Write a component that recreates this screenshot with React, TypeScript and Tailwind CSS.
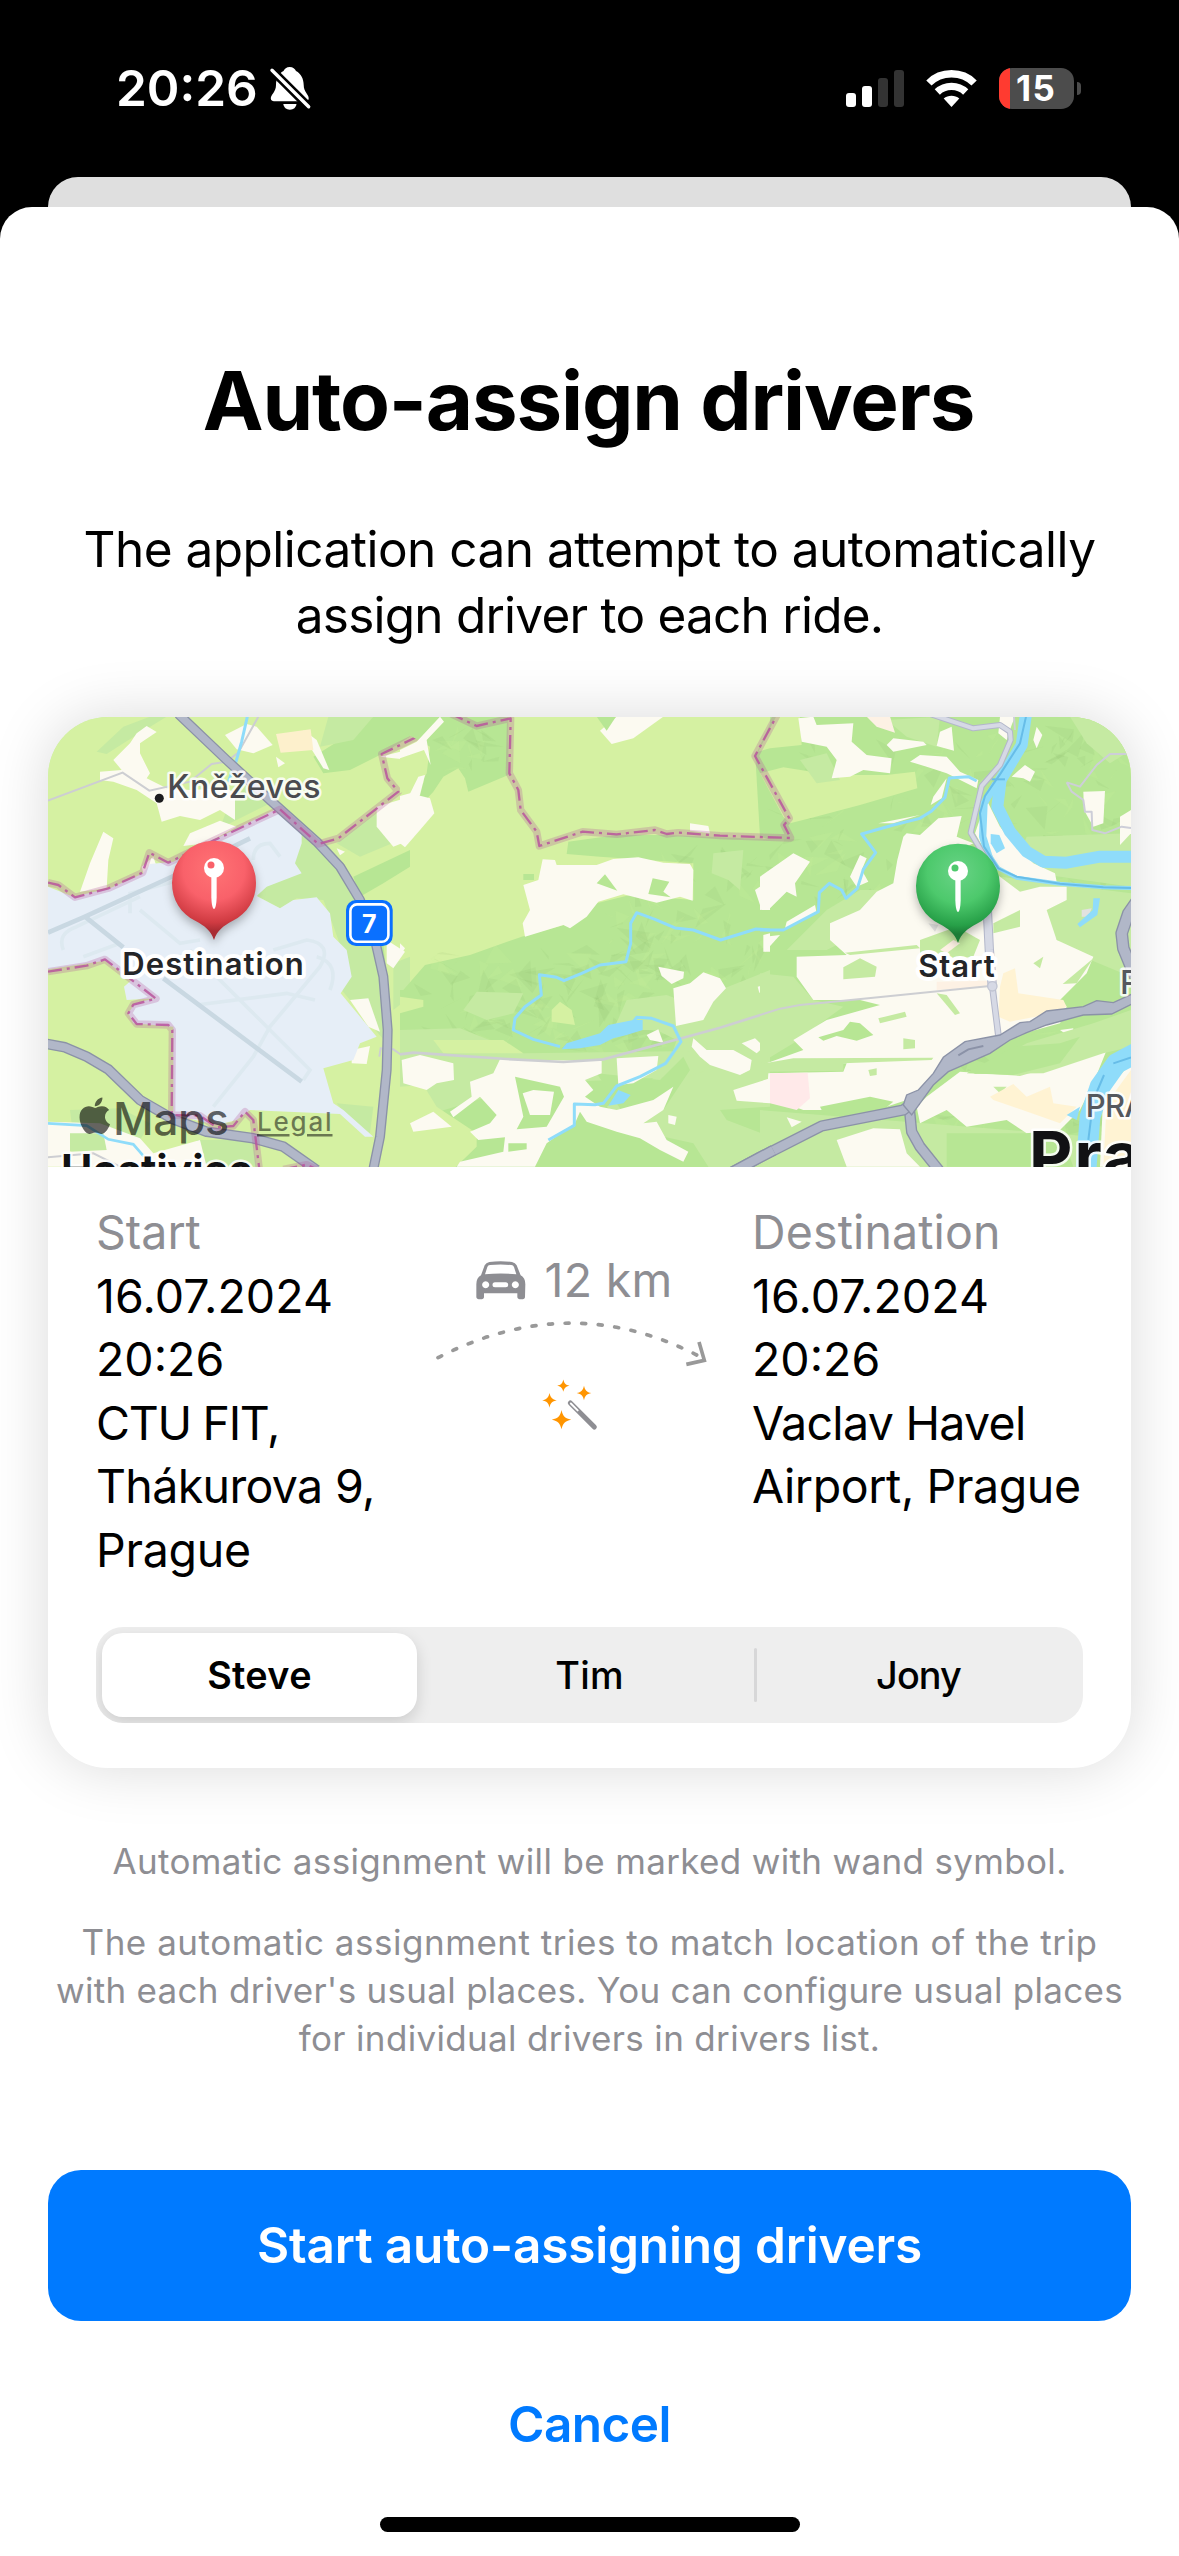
import React from "react";
import { FaApple } from "react-icons/fa";

const CREAM = "#fcfaf1";
const LIGHT = "#d5f1a2";
const MID = "#c5eaa2";
const FOREST = "#b7e694";
const WATER = "#8fdcfa";
const TAN = "#fff3d3";

function Shapes({ fill, list }: { fill: string; list: string[] }) {
  return (
    <g fill={fill}>
      {list.map((points, i) => (
        <polygon key={i} points={points} />
      ))}
    </g>
  );
}

function Highway({ d, width }: { d: string; width: number }) {
  return (
    <g fill="none" strokeLinejoin="round">
      <path d={d} stroke="#8b92a7" strokeWidth={width} />
      <path d={d} stroke="#b1b7c8" strokeWidth={width - 8} />
    </g>
  );
}

function Boundary({ d }: { d: string }) {
  return (
    <g fill="none" strokeLinejoin="round">
      <path d={d} stroke="#b0569c" strokeOpacity=".27" strokeWidth="22" />
      <path d={d} stroke="#b9559c" strokeOpacity=".85" strokeWidth="7" strokeDasharray="42 15 9 15" />
    </g>
  );
}

/* Relief facets: small translucent triangles scattered over the woodland. */
function Relief({ x, y, w, h, count, seed }: { x: number; y: number; w: number; h: number; count: number; seed: number }) {
  let s = seed;
  const rnd = () => {
    s = (s * 16807) % 2147483647;
    return s / 2147483647;
  };
  const items = Array.from({ length: count }, () => {
    const cx = x + rnd() * w;
    const cy = y + rnd() * h;
    const p = () => `${(cx + (rnd() - 0.5) * 100).toFixed(0)},${(cy + (rnd() - 0.5) * 90).toFixed(0)}`;
    return { points: `${p()} ${p()} ${p()}`, dark: rnd() > 0.4 };
  });
  return (
    <g>
      {items.map((t, i) => (
        <polygon key={i} points={t.points} fill={t.dark ? "#6b8f4a" : "#cdf29a"} fillOpacity={t.dark ? 0.065 : 0.16} />
      ))}
    </g>
  );
}

function Pin({ x, y, id, top, mid, edge, tip }: { x: number; y: number; id: string; top: string; mid: string; edge: string; tip: string }) {
  const body = "M0 172 C-10 142 -28 130 -55 115 C-100 92 -126 52 -126 0 A126 126 0 0 1 126 0 C126 52 100 92 55 115 C28 130 10 142 0 172Z";
  return (
    <g transform={`translate(${x} ${y})`}>
      <defs>
        <radialGradient id={id} cx="0" cy="-40" r="185" gradientUnits="userSpaceOnUse">
          <stop offset="0" stopColor={top} />
          <stop offset=".5" stopColor={mid} />
          <stop offset=".86" stopColor={edge} />
          <stop offset="1" stopColor={tip} />
        </radialGradient>
        <filter id={`${id}-shadow`} x="-40%" y="-40%" width="180%" height="180%">
          <feGaussianBlur stdDeviation="14" />
        </filter>
      </defs>
      <path d={body} transform="translate(0 14)" fill="#000" fillOpacity=".28" filter={`url(#${id}-shadow)`} />
      <path d={body} fill={`url(#${id})`} />
      <circle cx="0" cy="-44" r="30" fill="#fff" />
      <circle cx="-9" cy="-53" r="10.5" fill={mid} />
      <path d="M-8 -20 H8 V45 Q7 70 2 78 H-2 Q-7 70 -8 45Z" fill="#fff" />
    </g>
  );
}

function MapView() {
  return (
    <svg viewBox="48 717 1083 450" className="block h-[450px] w-full bg-[#c5eaa2]" role="img" aria-label="Route map">
      <rect x="48" y="717" width="1083" height="450" fill={LIGHT} />

      {/* western part: airport and Kněževes */}
      <g transform="translate(40 710) scale(.33333)">
        <Shapes fill={FOREST} list={["1000,20 1110,20 1110,80 1030,130 930,180 850,190 820,140 900,90 960,40", "940,500 1110,420 1110,470 1030,520 960,560", "985,720 1030,700 1050,900 1040,1000 960,850"]} />
        <Shapes fill={MID} list={["170,125 250,50 330,20 380,20 250,100 200,132", "600,225 680,240 700,275 540,355 560,300", "780,370 860,400 920,480 970,590 1010,700 1040,900 1040,1000 930,870 905,840 935,800 870,620 850,570 770,565 720,595 655,560 650,540 780,490 760,455 785,400", "865,20 1000,20 940,90 840,110", "890,400 1020,300 1080,390 960,440", "90,1200 240,1195 330,1240 300,1290 180,1260 95,1240", "1060,760 1110,740 1110,860 1060,900", "470,1290 640,1290 650,1370 500,1370", "890,1180 1000,1190 990,1270 930,1230"]} />
        <Shapes fill={CREAM} list={[
          "320,48 350,66 300,100 300,130 330,190 320,205 380,235 450,240 560,235 585,250 585,330 540,300 480,330 420,318 365,335 350,280 290,240 220,215 180,210 180,185 245,180 220,150 270,100 290,70",
          "555,75 620,42 650,50 698,105 640,130 590,118",
          "190,365 220,385 205,450 200,535 120,545 150,460",
          "790,60 830,90 868,180 850,175 810,110",
          "450,370 540,332 590,350 500,400 430,408",
          "1010,290 1110,260 1110,390 1060,410 1010,350",
          "1020,140 1110,118 1110,150",
          "24,1235 180,1240 300,1285 340,1330 480,1290 500,1370 24,1370",
          "930,870 985,865 1020,965 985,950",
          "935,1020 990,1008 980,1062 935,1060",
          "1040,690 1095,725 1060,775 1040,760",
          "1090,1060 1110,1060 1110,1130 1090,1120",
          "708,140 735,160 715,172",
          "890,415 915,425 900,436",
          "305,470 340,440 350,470 310,490",
        ]} />
        <Shapes fill={MID} list={["90,1270 190,1270 200,1320 90,1325"]} />
        <Shapes fill="#fdf0cc" list={["708,72 812,58 820,120 722,128"]} />
        <polygon
          fill="#e6eef7"
          points="24,530 100,560 210,535 310,490 330,462 400,455 520,390 720,292 785,375 785,400 765,460 785,490 680,530 650,558 720,595 760,570 830,562 870,610 880,680 920,720 935,800 902,850 1010,980 960,1000 940,1050 850,1075 880,1180 910,1200 1000,1280 975,1280 900,1212 630,1200 590,1230 530,1245 400,1215 400,950 280,940 265,910 285,880 345,865 260,870 252,830 275,810 195,752 24,778"
        />
        <g fill="none" stroke="#dde9f0" strokeWidth="11">
          <path d="M520 1190 L640 1040 L690 950 L840 770 Q880 700 800 690 L700 720" />
          <path d="M450 720 L580 850 L690 960 L810 1080 L790 1110" />
          <path d="M470 885 L740 850 L825 870" />
          <path d="M70 720 Q50 670 110 650 L300 560 M130 740 L240 700 M270 610 L270 550 L420 510 M300 600 L420 700 L480 690" />
          <path d="M640 450 Q640 400 690 400 L720 440 M830 740 Q900 760 870 840" />
        </g>
        <g fill="none" stroke="#c9d8e2" strokeWidth="14">
          <path d="M24 668 L130 622 L400 498 L630 385" />
          <path d="M135 620 L250 712 M370 805 L785 1115" />
        </g>
        <g fill="none" stroke="#cdced2" strokeWidth="6">
          <path d="M24 272 L248 188 L328 242 L450 215 L515 162 L560 155 L595 128 L655 20" />
          <path d="M1018 1040 L1022 1015 L1060 1018 L1080 1032 L1110 1030 M24 1342 L160 1330 L240 1370" />
        </g>
        <g fill="none" stroke={WATER} strokeWidth="9">
          <path d="M622 20 L605 95 L588 155 L565 215" />
          <path d="M24 1240 L140 1247 L205 1288 L280 1303 L312 1340" strokeWidth="8" />
        </g>
        <Highway width={30} d="M415 12 L560 150 L690 270 L830 395 L900 470 L960 570 L1005 690 L1030 800 L1043 960 L1040 1080 L1020 1280 L1000 1378" />
        <Highway width={32} d="M10 1000 L75 1012 L140 1040 L205 1078 L300 1170 L400 1228 L500 1265 L640 1285 L730 1310 L830 1380" />
        <Boundary d="M24 518 L55 525 L105 562 L205 535 L308 488 L328 428 L385 458 L520 392 L720 298 L835 402 L895 385 L1075 245 L1042 205 L1025 132 L1140 76 L1125 48 L1128 10" />
        <Boundary d="M24 785 L140 767 L195 748 L348 866 L280 884 L265 910 L290 942 L385 945 L397 960 L395 1215 L480 1217 L530 1252 L580 1248 L615 1205 L640 1230 L658 1378 M730 1378 L800 1364 L830 1378" />
      </g>

      {/* central part: valley and stream */}
      <g transform="translate(400 710) scale(.33333)">
        <Shapes fill={FOREST} list={[
          "0,20 325,20 325,195 205,245 195,205 175,175 130,200 100,245 45,305 25,290 80,190 90,110 0,60",
          "10,840 75,765 210,735 365,680 510,640 590,580 690,555 880,570 880,460 600,440 500,432 505,395 650,375 800,375 1110,388 1110,1378 0,1378 0,840",
          "1065,138 1110,110 1110,200",
        ]} />
        <Relief x={60} y={740} w={760} h={270} count={110} seed={11} />
        <Relief x={640} y={430} w={460} h={390} count={80} seed={29} />
        <Relief x={130} y={60} w={150} h={110} count={18} seed={5} />
        <Shapes fill={MID} list={[
          "640,960 680,870 800,855 920,900 960,840 1110,780 1110,1378 930,1378 880,1300 700,1260 620,1190 800,1080 830,990 770,960",
          "0,960 180,955 380,1035 0,1035",
          "940,430 1030,420 1020,540 985,510 935,490",
          "190,900 230,845 370,850 340,910 260,930",
          "0,1035 1110,1020 860,1100 400,1120 0,1240",
        ]} />
        <Shapes fill={FOREST} list={["590,1090 780,1110 850,1040 870,1080 790,1200 690,1240", "960,1200 1110,1190 1110,1280 980,1230", "520,1205 860,1330 850,1378 405,1378 450,1290"]} />
        <Shapes fill={LIGHT} list={["0,1130 70,1125 110,1190 230,1270 230,1310 160,1378 0,1378", "455,900 480,875 515,900 525,945 455,935", "500,460 590,442 585,470 510,470", "0,135 80,135 70,220 0,250", "0,860 70,870 70,890 0,910", "100,990 310,990 370,1030 130,1030"]} />
        <Shapes fill={CREAM} list={[
          "428,448 465,450 470,465 590,465 640,447 715,442 790,458 870,462 880,480 878,572 840,560 770,578 670,553 595,575 560,620 510,655 490,645 375,680 368,640 390,600 370,525 415,510",
          "0,258 30,250 90,265 103,310 60,360 15,412 0,400",
          "55,200 75,195 60,255 40,290 28,255",
          "120,20 132,35 80,90 92,165 72,120 0,145 0,120 50,95",
          "0,700 15,715 0,738",
          "600,62 650,20 790,20 700,85 635,102",
          "870,340 925,348 930,370 870,362",
          "775,770 852,785 850,805 815,822 785,798",
          "820,835 870,820 910,787 960,805 978,835 940,875 910,930 828,948",
          "1065,540 1110,510 1110,600 1085,600",
          "1090,675 1110,670 1110,725 1090,725",
          "1073,830 1110,820 1110,845 1078,848",
          "880,985 920,1020 1000,1020 1055,1050 1050,1080 1020,1095 930,1065 900,1040 875,1010",
          "1025,1000 1065,985 1092,1010 1070,1030",
          "740,975 775,958 790,998 750,990",
          "5,1050 60,1035 160,1060 162,1110 110,1120 80,1140 10,1120",
          "300,1048 605,1053 605,1090 555,1110 580,1140 555,1160 600,1190 650,1200 760,1170 820,1130 790,1200 730,1240 770,1235 800,1290 865,1325 850,1355 780,1320 720,1285 650,1265 560,1235 540,1205 525,1240 440,1300 405,1370 170,1370 180,1355 310,1325 315,1282 235,1290 210,1265 270,1240 290,1215 240,1160 160,1222 150,1205 215,1160 210,1115 280,1090",
          "650,1045 775,1038 770,1080 700,1120 655,1125",
          "1000,1140 1110,1105 1110,1180 1010,1172",
          "30,1240 100,1205 155,1250 40,1265",
        ]} />
        <Shapes fill={FOREST} list={["590,520 615,493 652,542", "745,552 758,505 808,515 790,545 812,562", "345,1100 480,1130 492,1160 440,1250 350,1258 370,1220", "325,1300 380,1300 380,1318 325,1325", "370,492 402,492 402,510 370,510", "590,20 648,20 620,62"]} />
        <Shapes fill={CREAM} list={["368,1150 400,1140 462,1145 450,1215 390,1215", "805,1215 830,1220 825,1245 805,1240"]} />
        <Shapes fill={WATER} list={["485,1018 500,1000 600,970 625,945 700,930 728,930 728,960 680,975 640,985 600,1005 540,1015", "625,1187 655,1140 692,1155 670,1180"]} />
        <path fill="none" stroke="#cdced2" strokeWidth="8" d="M0 1033 L40 1028 L320 1047 L490 1056 L610 1048 L850 983 L960 953 L1110 906 L1130 900" />
        <g fill="none" stroke={WATER} strokeWidth="9" strokeLinejoin="round">
          <path d="M1110 660 L1068 657 L962 690 L880 660 L825 654 L765 628 L710 608 L692 640 L692 700 L678 755 L600 765 L545 790 L492 812 L470 802 L418 794 L424 855 L375 890 L345 925 L340 960 L400 988 L480 1010" />
          <path d="M700 935 L710 922 L755 925 L820 948 L843 995 L797 1060 L720 1100 L650 1128 L610 1180 L585 1184 L523 1182 L523 1246 L445 1290" />
        </g>
      </g>

      {/* eastern part: river and city */}
      <g transform="translate(760 710) scale(.33333)">
        <rect x="30" y="15" width="1090" height="1365" fill={FOREST} />
        <polygon fill={FOREST} points="-14,138 40,20 60,20 60,400 0,380" />
        <Relief x={50} y={70} w={1040} h={530} count={170} seed={71} />
        <Relief x={70} y={1000} w={1030} h={340} count={60} seed={93} />
        <Shapes fill={LIGHT} list={["-5,125 48,20 120,20 125,105 30,115", "0,190 70,172 215,195 380,195 465,185 472,235 300,285 150,325 90,340 70,320"]} />
        <Shapes fill={MID} list={["930,20 1113,20 1113,120 1050,160 980,100", "80,720 200,600 300,540 420,540 400,620 200,720", "0,790 100,800 160,870 250,890 100,1000 0,1060", "800,380 1113,370 1113,530 900,500 760,480", "720,500 1113,550 1113,800 920,720", "600,1090 1000,1000 1000,1080 760,1130", "0,1200 1000,1280 1000,1378 0,1378", "120,150 200,130 240,210 170,220", "380,30 540,20 530,110 440,80"]} />
        <Shapes fill={CREAM} list={[
          "115,25 160,20 170,45 280,40 275,95 320,135 395,145 390,190 310,180 270,200 215,205 230,150 200,110 125,95",
          "380,105 400,85 490,95 500,105 400,125",
          "540,65 575,50 582,122 530,108",
          "450,155 480,135 560,140 600,185 655,210 650,235 560,190 500,170",
          "720,20 765,20 755,45 740,90 715,70",
          "830,50 847,75 830,115 820,90",
          "755,200 795,165 825,185 810,215 790,205",
          "970,245 1035,243 1030,340 1000,350 972,300",
          "1080,320 1113,300 1113,370 1080,405",
          "680,270 720,350 760,400 820,460 885,490 890,515 760,500 690,450 645,370",
          "440,370 480,375 535,325 605,318 590,380 640,400 600,420 720,500 780,545 840,530 920,530 920,570 860,600 890,690 1000,740 980,790 900,870 920,890 900,940 720,990 600,1040 520,1100 440,1170 350,1200 130,1200 20,1160 25,1090 250,1085 260,1060 20,1060 130,1020 100,990 200,930 360,885 300,870 160,870 110,800 110,740 260,735 210,690 210,640 300,600 350,545 400,520 412,450 430,380",
          "0,600 0,500 100,430 150,455 105,520 110,560 80,545 30,595",
          "300,435 320,445 305,480 325,515 290,530 270,500",
          "165,585 170,610 75,655 80,635",
          "15,680 60,675 15,725",
          "560,205 545,265 512,285 520,260",
          "355,340 480,315 400,340",
          "500,1160 600,1085 780,1098 860,1075 940,1055 1040,1020 1000,1120 960,1200 900,1260 800,1270 740,1230 620,1250 560,1200 480,1240 470,1190",
          "1030,1150 1113,1060 1113,1370 1020,1370",
          "230,1290 340,1255 420,1258 440,1330 480,1370 260,1370",
          "80,1222 125,1235 95,1252",
          "740,1045 770,1035 770,1070 750,1075",
          "900,960 940,955 935,985",
        ]} />
        <Shapes fill={MID} list={[
          "250,772 300,745 350,770 345,800 250,808",
          "255,728 470,705 480,715 270,735",
          "355,925 435,905 440,920 360,940",
          "530,850 560,855 600,910 585,915",
          "430,985 465,990 465,1015 430,1018",
          "0,1062 100,1045 520,1043 515,1050 250,1060 250,1082 0,1085",
          "480,690 590,650 660,690 640,740 560,750 480,730",
          "700,640 780,600 780,650 700,670",
          "820,760 850,740 840,775",
          "908,822 1000,745 950,820",
          "800,1000 1000,940 1113,900 1113,1010 1030,1030 850,1090 640,1092",
          "325,1080 350,1075 350,1095 330,1098",
          "700,1130 740,1130 720,1150",
        ]} />
        <Shapes fill={FOREST} list={["175,982 250,960 270,935 300,940 340,975 290,992 230,978 190,992", "620,1090 760,1010 900,1000 960,980 900,1060 760,1095", "180,1190 330,1160 400,1175 350,1215 190,1210", "560,1270 800,1270 900,1260 940,1370 560,1370"]} />
        <Shapes fill={TAN} list={["720,830 730,790 765,775 775,850 910,870 920,890 880,910 750,935 715,920", "690,1160 760,1122 800,1160 870,1130 880,1180 950,1190 900,1240 830,1215 700,1170", "1040,1180 1113,1080 1113,1370 1030,1370"]} />
        <Shapes fill="#fdf1e4" list={["530,815 690,812 690,830 530,840", "320,20 390,20 405,68 350,50", "540,720 580,690 600,700 560,730"]} />
        <polygon fill="#ffe9e9" points="30,1090 143,1088 150,1165 110,1200 30,1180" />
        <polygon fill="#e2e2e0" points="505,640 535,645 525,665" />
        <polygon fill="#e2e2e0" points="965,600 995,595 985,620 965,620" />
        <path fill="none" stroke="#cdced2" strokeWidth="6" d="M0 915 L60 896 L120 885 L250 872 L690 828" />
        <g fill="none" stroke={WATER} strokeLinejoin="round">
          <path strokeWidth="36" d="M798 12 L785 105 L722 210 L712 290 L750 365 L800 425 L850 455 L920 458 L1020 440 L1120 440" />
          <path strokeWidth="22" d="M708 220 L672 280 L668 380 L690 450" />
          <path strokeWidth="12" d="M665 330 L672 410 L715 475 L770 503 L900 521 L1030 532 L1120 534" />
          <path strokeWidth="62" d="M1130 1028 L1070 1060 L1020 1130 L990 1220 L978 1380" />
          <path strokeWidth="9" d="M0 660 L70 660 L175 605 L178 548 L208 520 L245 540 L258 565 L292 535 L310 478 L347 428 L305 372 L400 345 L480 325 L515 303 L555 262 L568 204 L625 200 L650 213" />
        </g>
        <Shapes fill={WATER} list={["692,372 718,375 735,415 710,430 692,400", "1000,565 1020,565 1012,615 960,652 952,642 998,600", "920,1215 960,1190 950,1230"]} />
        <g fill="none" stroke="#67bde8" strokeWidth="6">
          <path d="M798 20 L780 100 L722 190 L675 258 L660 310 L672 410 L715 475 L770 500 L900 521 L1030 532 L1113 534" />
          <path d="M1113 1042 L1060 1060 M1032 1095 L1000 1170 L985 1290" />
          <path d="M695 208 H735" />
        </g>
        <g fill="none" strokeLinejoin="round">
          <path stroke="#cdced8" strokeWidth="6" d="M762 20 L765 60 M920 217 L960 230 L1010 165 L1050 132 L1100 132 M920 217 L935 245 L970 270 L975 305 L995 305 L997 360 L1035 370 L1085 350 L1113 354" />
          <path stroke="#b3b7ca" strokeWidth="18" d="M510 12 L640 55 L720 45 L750 65 L752 90 L720 165 L665 228 L632 368 L680 450" />
          <path stroke="#d6d9e5" strokeWidth="12" d="M510 12 L640 55 L720 45 L750 65 L752 90 L720 165 L665 228 L632 368 L680 450" />
          <path stroke="#b3b7ca" strokeWidth="28" d="M680 560 L688 720 L697 830" />
          <path stroke="#d6d9e5" strokeWidth="22" d="M680 560 L688 720 L697 830" />
          <path stroke="#b3b7ca" strokeWidth="20" d="M697 830 L715 975" />
          <path stroke="#d6d9e5" strokeWidth="14" d="M697 830 L715 975" />
          <circle cx="697" cy="829" r="14" fill="#d6d9e5" stroke="#c0c4d2" strokeWidth="4" />
        </g>
        <Highway width={34} d="M448 1195 L455 1265 L480 1310 L540 1385" />
        <Highway width={38} d="M1140 560 L1105 610 L1085 670 L1090 715 L1125 800" />
        <Highway width={34} d="M-90 1390 L0 1342 L185 1248 L430 1200 L470 1170" />
        <polygon
          fill="#b1b7c8"
          stroke="#8b92a7"
          strokeWidth="4"
          points="430,1185 440,1155 475,1140 520,1090 550,1042 615,995 720,975 780,938 810,935 860,903 970,890 1010,872 1060,878 1120,850 1120,880 1055,912 970,915 860,945 800,968 750,990 690,1030 565,1085 520,1125 480,1180 455,1215"
        />
        <path d="M595 1036 L625 1018 L670 1008" fill="none" stroke="#8b92a7" strokeWidth="6" />
      </g>

      <g transform="translate(400 710) scale(.33333)">
        <Highway width={34} d="M990 1390 L1080 1342 L1120 1321" />
        <Boundary d="M150 10 L230 48 L332 25 L328 190 L355 240 L362 300 L410 365 L418 408 L548 365 L650 373 L765 360 L800 372 L835 368 L960 377 L1172 384 L1152 345 L1168 325 L1065 138 L1134 10" />
      </g>

      {/* pins */}
      <g transform="translate(40 710) scale(.33333)">
        <Pin x={522} y={518} id="pin-destination" top="#ff7375" mid="#f9616a" edge="#d03b42" tip="#a92c33" />
      </g>
      <g transform="translate(760 710) scale(.33333)">
        <Pin x={594} y={527} id="pin-start" top="#69d386" mid="#4dc96c" edge="#27a048" tip="#1b7c36" />
      </g>

      {/* road shield */}
      <rect x="346" y="900" width="46.7" height="46" rx="10" fill="#0a70ff" />
      <rect x="350.4" y="904.4" width="38" height="37.4" rx="6.5" fill="none" stroke="#fff" strokeWidth="2.6" />

      {/* labels */}
      <g className="font-['Inter',sans-serif]" stroke="#fff" strokeOpacity=".85" strokeLinejoin="round" style={{ paintOrder: "stroke" }}>
        <circle cx="159.3" cy="798.3" r="4.5" fill="#1c1c1e" stroke="none" />
        <text x="369.3" y="932.6" textAnchor="middle" fontSize="25" fontWeight="700" fill="#fff" stroke="none">7</text>
        <text x="167.3" y="798.3" fontSize="32" fontWeight="500" letterSpacing=".62" fill="#4a4b4f" strokeWidth="5">Kněževes</text>
        <text x="122.3" y="974.5" fontSize="31" fontWeight="600" letterSpacing="1.1" fill="#242528" strokeWidth="8" strokeOpacity="1">Destination</text>
        <text x="918.3" y="976.8" fontSize="31" fontWeight="600" letterSpacing=".9" fill="#242528" strokeWidth="8" strokeOpacity="1">Start</text>
        <text x="61" y="1184.6" fontSize="42" fontWeight="700" letterSpacing="-.21" fill="#111214" strokeWidth="5">Hostivice</text>
        <text x="1029" y="1180" fontSize="67" fontWeight="700" letterSpacing="2" fill="#111214" strokeWidth="5">Pra</text>
        <text x="1085.7" y="1117" fontSize="31" fontWeight="500" letterSpacing="-.6" fill="#55585e" strokeWidth="5">PRA</text>
        <text x="1120" y="994" fontSize="32" fontWeight="500" fill="#55585e" strokeWidth="5">P</text>
      </g>

      {/* attribution */}
      <g className="font-['Inter',sans-serif]" fill="#000" fillOpacity=".6">
        <FaApple x={74} y={1095} size={41.5} color="#000" />
        <text x="113" y="1134.5" fontSize="44.5" fontWeight="500" letterSpacing="-.46">Maps</text>
        <text x="257" y="1131" fontSize="26" fontWeight="500" letterSpacing="1.79" fillOpacity=".5">Legal</text>
        <path d="M257 1134h32.5v2.6H257zM307 1134h25.500v2.600H307z" fillOpacity=".5" />
      </g>
    </svg>
  );
}

function BellSlash() {
  return (
    <svg viewBox="268 64 44 48" className="h-12 w-11" aria-hidden="true">
      <path fill="#fff" d="M289.700 67C286.500 67 284.500 69 283.500 71C278.500 73.500 276 79 276 85C276 92 270.800 94.500 270.800 98.500C270.800 100.500 272.500 101.200 274 101.200H305.500C307.500 101.200 308.700 100 308.700 98.200C308.700 94.500 303.700 92 303.700 85C303.700 79 301 73.500 296 71C295 69 293 67 289.700 67Z" />
      <path fill="#fff" d="M283.300 104H296.500C296 107.500 293.500 109.700 289.900 109.700C286.300 109.700 283.800 107.500 283.300 104Z" />
      <path stroke="#000" strokeWidth="8.500" d="M270 68.200 L312 110.100" />
      <path stroke="#fff" strokeWidth="3.400" strokeLinecap="round" d="M272 70.200 L308.700 106.800" />
    </svg>
  );
}

function StatusBar() {
  return (
    <header className="h-[177px] bg-black pt-[58px] text-white">
      <div className="flex h-[60px] items-center justify-between pr-[98px] pl-[116px]">
        <div className="flex items-center">
          <span className="w-[152px] text-[49.5px] font-semibold">20:26</span>
          <BellSlash />
        </div>
        <div className="flex items-center">
          <svg viewBox="0 0 58 37" className="h-[37px] w-[58px]" aria-hidden="true">
            <g fill="#fff">
              <rect x="0" y="23" width="10" height="14" rx="3" />
              <rect x="16" y="16" width="10" height="21" rx="3" />
              <g fill="#333">
                <rect x="32" y="8" width="10" height="29" rx="3" />
                <rect x="48" y="0" width="10" height="37" rx="3" />
              </g>
            </g>
          </svg>
          <svg viewBox="0 0 51 37" className="ml-[22px] h-[37px] w-[51px]" aria-hidden="true">
            <g fill="none" stroke="#fff" strokeWidth="7.400">
              <path d="M2.900 13 C15 0.700 36 0.700 48.100 13" />
              <path d="M11.300 22 C19 14.500 32 14.500 39.700 22" />
            </g>
            <path fill="#fff" d="M25.500 37 L17.700 28.600 C22 24.900 29 24.900 33.300 28.600Z" />
          </svg>
          <div className="ml-[22px] flex h-[41px] w-[75px] items-center overflow-hidden rounded-[13px] bg-[#4c4c4c]">
            <span className="h-full w-[11px] bg-[#ff3b30]" />
            <span className="ml-1.5 text-[35px] leading-none font-bold tracking-[1.4px]">15</span>
          </div>
          <span className="ml-[3px] h-[13px] w-1 rounded-r-full bg-[#4c4c4c]" />
        </div>
      </div>
    </header>
  );
}

function CarIcon() {
  return (
    <svg viewBox="230 302 150 116" className="h-[38.7px] w-[50px]" aria-hidden="true">
      <path
        fill="#8e8e93"
        fillRule="evenodd"
        d="M270 305Q304 301 338 305Q348 307 352 315L364 345Q378 352 378 372L377 410Q377 417 366 417Q354 417 354 410V399H254V410Q254 417 243 417Q231 417 231 410V372Q231 352 245 345L256 315Q260 307 270 305ZM272 314Q266 314 264 320L257 342Q304 337 351 342L344 320Q342 314 336 314Q304 311 272 314ZM259 362.500a10.500 10.500 0 1 0 .01 0ZM348 362.500a10.500 10.500 0 1 0 .01 0ZM287 366a7.500 7.500 0 0 0 0 15H319a7.500 7.500 0 0 0 0-15Z"
      />
    </svg>
  );
}

function RouteArc() {
  return (
    <svg viewBox="101 480 828 140" className="mt-2.5 h-[46.7px] w-[276px]" fill="none" stroke="#999" strokeWidth="11" aria-hidden="true">
      <path d="M113 590 Q510 386 893 584" strokeLinecap="round" strokeDasharray="12 37.800" />
      <path d="M896 543 L912 598 L858 610" />
    </svg>
  );
}

function Wand() {
  const star = "M0 -1C.14 -.36 .36 -.14 1 0C.36 .14 .14 .36 0 1C-.14 .36 -.36 .14 -1 0C-.36 -.14 -.14 -.36 0 -1Z";
  return (
    <svg viewBox="430 655 168 158" className="mt-[11px] mr-1 h-[52.7px] w-[56px]" aria-hidden="true">
      <g fill="#ff9500">
        <path d={star} transform="translate(494 678) scale(18.500)" />
        <path d={star} transform="translate(556 700) scale(22)" />
        <path d={star} transform="translate(452.500 722) scale(22)" />
        <path d={star} transform="translate(488.500 780) scale(29)" />
      </g>
      <path d="M515 730 L587 802" stroke="#8e8e93" strokeWidth="15" strokeLinecap="round" />
      <path d="M516.500 731.500 L537 752" stroke="#fff" strokeWidth="6" strokeLinecap="round" />
    </svg>
  );
}

function RideCard() {
  return (
    <section className="mx-12 mt-[69px] rounded-[60px] bg-white shadow-[0_0_60px_rgba(0,0,0,0.15)]">
      <div className="overflow-hidden rounded-t-[60px]">
        <MapView />
      </div>
      <div className="px-12 pb-[45px]">
        <div className="flex h-[460px] pt-[34px] text-[46.5px] leading-[63.6px] whitespace-nowrap">
          <div className="w-[296px]">
            <div className="text-[#8e8e93]">Start</div>
            <div className="tracking-[0.11px]">16.07.2024</div>
            <div>20:26</div>
            <div className="tracking-[-1.29px]">CTU FIT,</div>
            <div className="tracking-[-0.65px]">Thákurova 9,</div>
            <div className="tracking-[-0.27px]">Prague</div>
          </div>
          <div className="flex flex-1 flex-col items-center pt-[49.5px]">
            <div className="ml-[5px] flex h-[60px] items-center gap-[18px] text-[#8e8e93]">
              <CarIcon />
              <span className="tracking-[0.28px]">12 km</span>
            </div>
            <RouteArc />
            <Wand />
          </div>
          <div className="w-[331px]">
            <div className="tracking-[0.14px] text-[#8e8e93]">Destination</div>
            <div className="tracking-[0.11px]">16.07.2024</div>
            <div>20:26</div>
            <div className="tracking-[-0.69px]">Vaclav Havel</div>
            <div className="tracking-[-0.39px]">Airport, Prague</div>
          </div>
        </div>
        <div className="flex h-24 items-center overflow-hidden rounded-[27px] bg-[#eee] text-center text-[37.8px] leading-[84px] font-medium">
          <div className="w-[329px] shrink-0 pr-2 pl-1.5">
            <div className="rounded-[21px] bg-white font-semibold tracking-[0.33px] shadow-[0_6px_16px_rgba(0,0,0,0.14)]">Steve</div>
          </div>
          <div className="w-[329px] shrink-0 tracking-[0.25px]">Tim</div>
          <div className="-mr-[3px] h-[54px] w-[3px] shrink-0 rounded-full bg-[#d7d7d8]" />
          <div className="w-[329px] shrink-0 tracking-[-0.91px]">Jony</div>
        </div>
      </div>
    </section>
  );
}

export default function App() {
  return (
    <div className="h-[2556px] w-[1179px] overflow-hidden bg-black font-['Inter',sans-serif] text-black">
      <StatusBar />
      <div className="mx-12 -mb-2.5 h-10 rounded-t-[30px] bg-[#dfdfdf]" />
      <main className="relative flex h-[2349px] flex-col rounded-t-[32px] bg-white pt-[144px] text-center whitespace-nowrap">
        <h1 className="pr-0.5 text-[81.5px] leading-[100px] font-bold tracking-[-1.13px]">Auto-assign drivers</h1>
        <p className="mt-[65px] text-[49.5px] leading-[66px]">
          <span className="block tracking-[-0.51px]">The application can attempt to automatically</span>
          <span className="block tracking-[-0.77px]">assign driver to each ride.</span>
        </p>
        <div className="text-left">
          <RideCard />
        </div>
        <div className="mt-[69px] flex flex-col gap-[33px] text-[35px] leading-[48px] text-[#8e8e93]">
          <p className="tracking-[0.34px]">Automatic assignment will be marked with wand symbol.</p>
          <p>
            <span className="block tracking-[0.52px]">The automatic assignment tries to match location of the trip</span>
            <span className="block tracking-[0.29px]">with each driver's usual places. You can configure usual places</span>
            <span className="block tracking-[0.34px]">for individual drivers in drivers list.</span>
          </p>
        </div>
        <button className="mx-12 mt-[108px] h-[151px] rounded-[33px] bg-[#007aff] text-[49.5px] font-semibold tracking-[-0.16px] text-white">
          Start auto-assigning drivers
        </button>
        <button className="mt-[73px] text-[49.5px] leading-[60px] font-semibold tracking-[-0.52px] text-[#007aff]">Cancel</button>
        <div className="mt-[63px] h-[15px] w-[420px] self-center rounded-full bg-black" />
      </main>
    </div>
  );
}
